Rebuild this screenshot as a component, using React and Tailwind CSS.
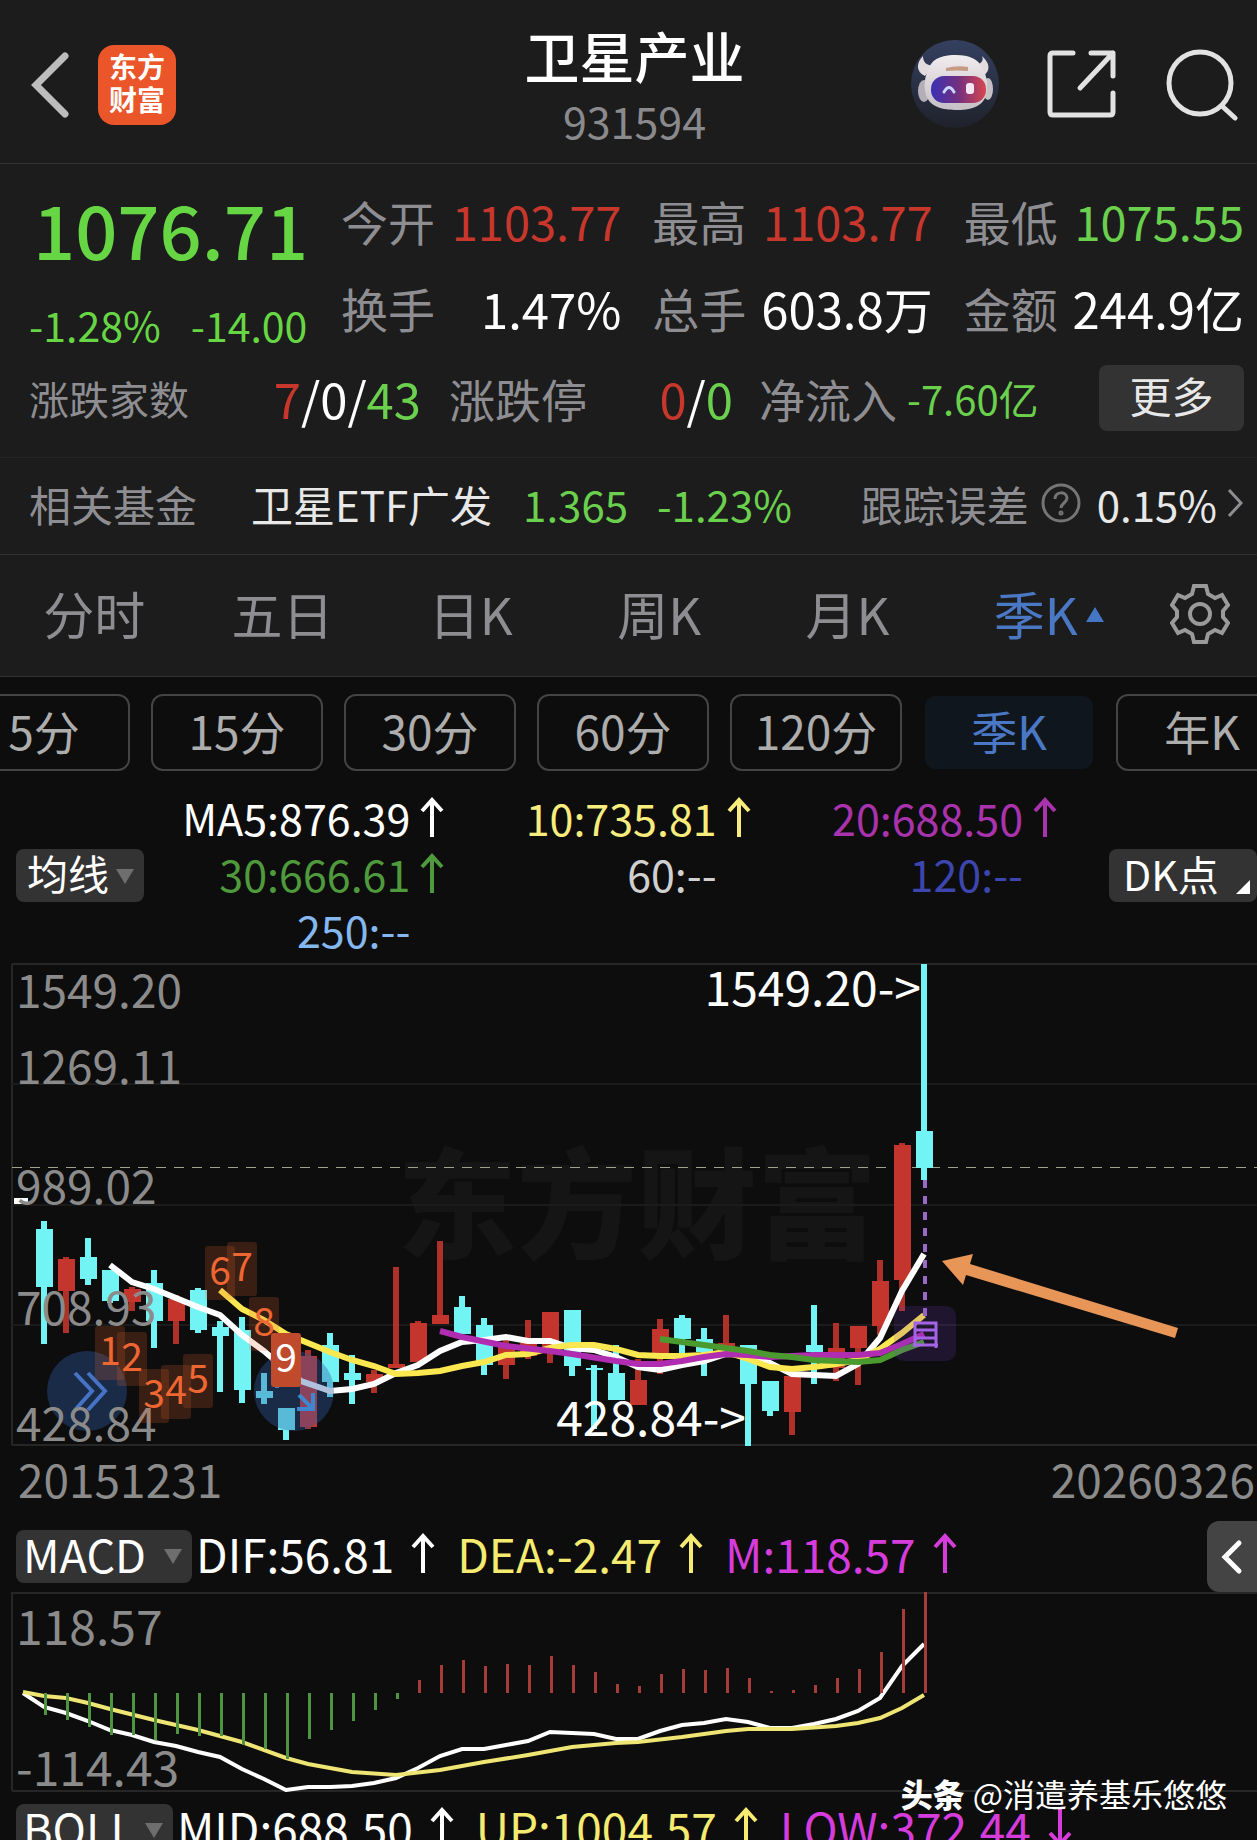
import React, { useState } from 'react';

const UP = '#c4352d';
const DOWN = '#72f4f4';

const quotes = [
    { label: '今开', value: '1103.77', color: 'text-[#c8372c]' },
    { label: '最高', value: '1103.77', color: 'text-[#c8372c]' },
    { label: '最低', value: '1075.55', color: 'text-[#6bd04e]' },
    { label: '换手', value: '1.47%', color: 'text-white text-[49px]' },
    { label: '总手', value: '603.8万', color: 'text-white text-[49px]' },
    { label: '金额', value: '244.9亿', color: 'text-white text-[49px]' },
];

const tabs = ['分时', '五日', '日K', '周K', '月K', '季K'];
const periods = ['5分', '15分', '30分', '60分', '120分', '季K', '年K'];

const averages = [
    { text: 'MA5:876.39', arrow: true, color: 'text-white' },
    { text: '10:735.81', arrow: true, color: 'text-[#f7ec7c]' },
    { text: '20:688.50', arrow: true, color: 'text-[#a933ac]' },
    { text: '30:666.61', arrow: true, color: 'text-[#4f9a3c]' },
    { text: '60:--', color: 'text-[#d0d0d0]' },
    { text: '120:--', color: 'text-[#3c46ae]' },
    { text: '250:--', color: 'text-[#84b8ee]' },
];

// [direction, high, body top, body bottom, low], one quarter every 22 units
const candles = [
    ['d', 1221, 1229, 1287, 1344], ['u', 1257, 1259, 1291, 1333], ['d', 1238, 1257, 1279, 1285],
    ['d', 1270, 1270, 1301, 1303], ['u', 1287, 1289, 1302, 1311], ['d', 1270, 1283, 1321, 1348],
    ['u', 1295, 1299, 1321, 1344], ['d', 1288, 1290, 1330, 1333], ['d', 1321, 1327, 1336, 1392],
    ['d', 1317, 1330, 1390, 1403], ['d', 1373, 1391, 1398, 1404], ['d', 1408, 1408, 1430, 1440],
    ['u', 1350, 1356, 1427, 1429], ['d', 1333, 1345, 1382, 1397], ['d', 1355, 1373, 1380, 1404],
    ['u', 1370, 1374, 1382, 1393], ['u', 1267, 1364, 1368, 1368], ['u', 1321, 1323, 1362, 1362],
    ['u', 1241, 1315, 1324, 1324], ['d', 1296, 1307, 1334, 1334], ['d', 1318, 1325, 1365, 1375],
    ['u', 1340, 1345, 1365, 1379], ['u', 1320, 1343, 1356, 1359], ['u', 1312, 1312, 1347, 1363],
    ['d', 1310, 1310, 1366, 1376], ['d', 1365, 1368, 1370, 1429], ['d', 1345, 1373, 1400, 1400],
    ['u', 1359, 1380, 1405, 1405], ['u', 1319, 1329, 1356, 1374], ['d', 1315, 1318, 1339, 1354],
    ['d', 1328, 1339, 1352, 1376], ['u', 1315, 1343, 1352, 1352], ['d', 1345, 1345, 1384, 1446],
    ['d', 1381, 1381, 1411, 1416], ['u', 1375, 1376, 1412, 1435], ['d', 1305, 1345, 1352, 1384],
    ['u', 1323, 1348, 1368, 1381], ['u', 1326, 1326, 1348, 1385], ['u', 1260, 1281, 1326, 1335],
    ['u', 1143, 1145, 1280, 1311], ['d', 964, 1131, 1168, 1180],
];

const maLines = [
    { color: '#ffffff', points: '110,1265 132,1282 154,1289 176,1298 198,1307 220,1315 242,1335 264,1351 286,1370 301,1381 330,1391 352,1389 374,1384 396,1373 418,1365 440,1351 462,1342 484,1340 506,1337 528,1341 550,1341 572,1348 594,1350 616,1357 638,1367 660,1370 682,1365 704,1361 726,1354 748,1355 770,1363 792,1374 814,1375 836,1376 858,1364 880,1338 902,1291 924,1254' },
    { color: '#fbe74f', points: '220,1290 242,1309 264,1320 286,1334 308,1343 330,1352 352,1360 374,1366 396,1374 418,1373 440,1371 462,1366 484,1362 506,1355 528,1354 550,1348 572,1345 594,1345 616,1349 638,1355 660,1356 682,1356 704,1355 726,1352 748,1359 770,1367 792,1369 814,1367 836,1364 858,1360 880,1349 902,1333 924,1315' },
    { color: '#b02cb0', points: '440,1331 462,1337 506,1346 550,1351 572,1354 616,1361 638,1364 660,1364 682,1361 704,1357 726,1354 748,1355 770,1357 814,1355 858,1355 880,1353 902,1344 924,1334' },
    { color: '#4b9a30', points: '660,1339 704,1345 748,1351 770,1355 792,1357 814,1360 858,1362 880,1360 902,1350 924,1342' },
];

const countMarks = [
    { n: 1, x: 95, y: 1326 },
    { n: 2, x: 117, y: 1332 },
    { n: 3, x: 139, y: 1369 },
    { n: 4, x: 161, y: 1365 },
    { n: 5, x: 183, y: 1354 },
    { n: 6, x: 205, y: 1246 },
    { n: 7, x: 227, y: 1242 },
    { n: 8, x: 249, y: 1297 },
];

const histogram = [
    1715, 1720, 1727, 1735, 1735, 1740, 1734, 1736, 1736, 1745, 1749, 1759, 1739, 1730, 1721, 1710, 1699,
    1680, 1665, 1660, 1666, 1664, 1665, 1656, 1665, 1672, 1684, 1686, 1674, 1669, 1670, 1668, 1678, 1691,
    1690, 1685, 1678, 1669, 1652, 1609, 1592,
];

const barX = (i) => 44 + i * 22;

function Arrow({ down }) {
    return (
        <svg viewBox="0 0 24 40" className={down ? 'w-6 h-10 rotate-180' : 'w-6 h-10'} fill="none" stroke="currentColor" strokeWidth="4" aria-hidden="true">
            <path d="M12 40V3M2 14L12 3L22 14" />
        </svg>
    );
}

function Dropdown({ label, options, className }) {
    return (
        <div className="relative shrink-0">
            <select
                aria-label={label}
                className={`appearance-none h-[53px] pb-[6px] rounded-lg bg-[#333333] text-white leading-[47px] outline-none ${className}`}
            >
                {options.map((o) => <option key={o}>{o}</option>)}
            </select>
            <svg viewBox="0 0 18 15" className="absolute right-[10px] top-[20px] w-[18px] h-[15px] pointer-events-none" aria-hidden="true">
                <path d="M0 0H18L9 15Z" fill="#6e6e6e" />
            </svg>
        </div>
    );
}

function Indicator({ text, color, down }) {
    return (
        <span className={`flex items-center gap-[17px] ${color}`}>
            {text}
            <Arrow down={down} />
        </span>
    );
}

function RobotAvatar() {
    return (
        <svg viewBox="0 0 88 88" className="w-[88px] h-[88px]" aria-hidden="true">
            <defs>
                <linearGradient id="halo" x1="0" y1="0" x2="0" y2="1">
                    <stop offset="0" stopColor="#34405f" />
                    <stop offset="1" stopColor="#1f222b" />
                </linearGradient>
                <linearGradient id="helmet" x1="0" y1="0" x2="0" y2="1">
                    <stop offset="0" stopColor="#f1ecee" />
                    <stop offset="1" stopColor="#c5bfc6" />
                </linearGradient>
                <linearGradient id="visor" x1="0" y1="0" x2="1" y2="0">
                    <stop offset="0" stopColor="#3a31b4" />
                    <stop offset="0.5" stopColor="#73307f" />
                    <stop offset="1" stopColor="#d8464f" />
                </linearGradient>
            </defs>
            <circle cx="44" cy="44" r="44" fill="url(#halo)" />
            <path d="M12 16C5 23 5 32 14 36L22 26C15 25 12 22 12 16ZM71 16C79 23 80 31 72 36L64 25C70 24 73 21 71 16Z" fill="#e2dcdf" />
            <ellipse cx="13" cy="51" rx="6" ry="11" fill="#b4aeb6" />
            <ellipse cx="77" cy="49" rx="5" ry="11" fill="#c5bfc6" />
            <path d="M18 28C22 17 34 15 45 15C58 15 68 19 71 28C76 36 77 43 76 52C74 65 62 70 47 70C31 70 19 67 15 55C12 45 14 36 18 28Z" fill="url(#helmet)" />
            <path d="M35 28Q46 25 57 27V31Q46 30 35 31Z" fill="#c69a83" />
            <rect x="20" y="36" width="55" height="27" rx="13" fill="url(#visor)" />
            <path d="M33 52Q38 43 43 52" fill="none" stroke="#c9d5ff" strokeWidth="3" strokeLinecap="round" />
            <rect x="55" y="43" width="8" height="11" rx="3" fill="#f2e6f7" />
        </svg>
    );
}

function Header() {
    return (
        <header className="relative flex items-center justify-between h-[164px] pl-[30px] pr-[18px] pb-[20px] bg-[#1c1c1c] border-b border-[#333333]">
            <div className="flex items-center gap-7 pt-[26px]">
                <button type="button" aria-label="返回">
                    <svg viewBox="0 0 40 68" className="w-10 h-[68px]" fill="none" stroke="#bdbdbd" strokeWidth="7" strokeLinecap="round">
                        <path d="M35 5L6 34L35 63" />
                    </svg>
                </button>
                <div className="flex items-center justify-center w-[78px] h-20 pb-1 rounded-2xl bg-[#ea5529] text-white text-[28px] leading-[33px] font-bold text-center">
                    东方<br />财富
                </div>
            </div>
            <div className="absolute inset-x-0 top-[18px] pl-3 text-center pointer-events-none">
                <h1 className="text-[55px] leading-[72px] font-medium text-white">卫星产业</h1>
                <p className="text-[43px] leading-[60px] text-[#8a8a8d]">931594</p>
            </div>
            <div className="flex items-center gap-[48px] pt-[24px]">
                <button type="button" aria-label="智能助手"><RobotAvatar /></button>
                <button type="button" aria-label="分享">
                    <svg viewBox="0 0 70 70" className="w-[70px] h-[70px]" fill="none" stroke="#e2e2e2" strokeWidth="5" strokeLinecap="round" strokeLinejoin="round">
                        <path d="M26 4H6Q3 4 3 7V63Q3 66 6 66H63Q66 66 66 63V44" />
                        <path d="M44 4H66V27M66 4L33 39" />
                    </svg>
                </button>
                <button type="button" aria-label="搜索">
                    <svg viewBox="0 0 74 74" className="w-[74px] h-[74px]" fill="none" stroke="#e2e2e2" strokeWidth="5" strokeLinecap="round">
                        <circle cx="35" cy="36" r="31" />
                        <path d="M57 59L70 71" />
                    </svg>
                </button>
            </div>
        </header>
    );
}

function QuotePanel() {
    return (
        <section className="bg-[#1c1c1c] border-b border-[#262626] h-[294px] pl-[29px] pr-[13px] pt-[13px]">
            <div className="flex justify-between h-[183px]">
                <div className="w-[300px] text-[#67d644]">
                    <div className="text-[74px] leading-[102px] font-medium pl-1">1076.71</div>
                    <div className="flex gap-[30px] mt-[9px] text-[41px] leading-[72px]">
                        <span>-1.28%</span>
                        <span>-14.00</span>
                    </div>
                </div>
                <dl className="grid grid-cols-3 content-start gap-x-[31px] w-[903px] text-[47px] leading-[87px]">
                    {quotes.map((q) => (
                        <div key={q.label} className="flex justify-between">
                            <dt className="text-[#8e8e92]">{q.label}</dt>
                            <dd className={`leading-[87px] ${q.color}`}>{q.value}</dd>
                        </div>
                    ))}
                </dl>
            </div>
            <div className="flex items-center h-[76px] leading-[72px] text-[46px] text-[#8e8e92]">
                <span className="text-[40px] w-[200px]">涨跌家数</span>
                <span className="w-[192px] text-right text-[49px] text-white">
                    <span className="text-[#c8372c]">7</span>/0/<span className="text-[#6bd04e]">43</span>
                </span>
                <span className="w-[170px] pl-[28px]">涨跌停</span>
                <span className="w-[142px] text-right text-[49px] text-white">
                    <span className="text-[#c8372c]">0</span>/<span className="text-[#6bd04e]">0</span>
                </span>
                <span className="pl-[26px]">净流入</span>
                <span className="pl-[10px] text-[40px] text-[#6bd04e]">-7.60亿</span>
                <button type="button" className="ml-auto w-[145px] h-[66px] pb-[6px] leading-[60px] rounded-lg bg-[#333333] text-[42px] text-[#e8e8e8]">更多</button>
            </div>
        </section>
    );
}

function FundRow() {
    return (
        <a href="#fund" className="flex items-center h-[97px] pb-[6px] pl-[29px] pr-[14px] bg-[#1c1c1c] border-b border-[#333333] text-[42px] text-[#8e8e92]">
            <span>相关基金</span>
            <span className="ml-[54px] text-[#e8e8e8]">卫星ETF广发</span>
            <span className="ml-[31px] text-[#6bd04e]">1.365</span>
            <span className="ml-[29px] text-[#6bd04e]">-1.23%</span>
            <span className="ml-auto">跟踪误差</span>
            <svg viewBox="0 0 40 40" className="ml-[12px] w-10 h-10" fill="none" stroke="#757575" strokeWidth="3" aria-hidden="true">
                <circle cx="20" cy="20" r="18" />
                <path d="M14 16C14 8 26 8 26 15C26 20 20 20 20 25" />
                <circle cx="20" cy="30" r="1" />
            </svg>
            <span className="ml-[16px] text-[#e8e8e8]">0.15%</span>
            <svg viewBox="0 0 16 28" className="ml-[10px] w-4 h-7" fill="none" stroke="#8e8e92" strokeWidth="3" aria-hidden="true">
                <path d="M2 1L14 14L2 27" />
            </svg>
        </a>
    );
}

function TabBar({ active, onChange }) {
    return (
        <nav className="flex items-center h-[122px] pb-1 bg-[#1c1c1c] border-b border-[#333333] text-[51px]">
            {tabs.map((t) => (
                <button
                    key={t}
                    type="button"
                    onClick={() => onChange(t)}
                    className={t === active ? 'relative flex-1 text-[#4a78c4]' : 'relative flex-1 text-[#8e8e92]'}
                >
                    {t}
                    {t === active && (
                        <svg viewBox="0 0 18 15" className="absolute right-[26px] top-[32px] w-[18px] h-[15px]" aria-hidden="true">
                            <path d="M9 0L18 15H0Z" fill="#4377c6" />
                        </svg>
                    )}
                </button>
            ))}
            <button type="button" aria-label="设置" className="flex justify-center w-[127px] pl-[13px]">
                <svg viewBox="0 0 60 60" className="w-[60px] h-[60px]" fill="none" stroke="#9a9a9a" strokeWidth="4">
                    <path d="M24 2H36L38 10L45 14L52 11L58 21L53 27V33L58 39L52 49L45 46L38 50L36 58H24L22 50L15 46L8 49L2 39L7 33V27L2 21L8 11L15 14L22 10Z" />
                    <circle cx="30" cy="30" r="10" />
                </svg>
            </button>
        </nav>
    );
}

function PeriodBar({ active, onChange }) {
    return (
        <div className="overflow-hidden pt-[17px]">
            <div className="flex gap-[21px] -ml-[42px]">
                {periods.map((p) => (
                    <button
                        key={p}
                        type="button"
                        onClick={() => onChange(p)}
                        className={
                            p === active
                                ? 'shrink-0 w-[172px] h-[77px] pb-[6px] rounded-xl border-2 border-[#0d0d0d] bg-[#10161e] text-[46px] leading-[66px] text-[#4a78c4]'
                                : 'shrink-0 w-[172px] h-[77px] pb-[6px] rounded-xl border-2 border-[#444444] text-[46px] leading-[66px] text-[#adadad]'
                        }
                    >
                        {p}
                    </button>
                ))}
            </div>
        </div>
    );
}

function AverageLegend() {
    return (
        <div className="flex items-center mt-[20px] h-[168px] pl-4">
            <Dropdown label="主图指标" options={['均线', 'BOLL']} className="w-[128px] pl-[11px] text-[41px]" />
            <div className="grid grid-cols-3 flex-1 mr-[46px] pb-1 text-[43px] leading-[56px]">
                {averages.map((a) => (
                    <span key={a.text} className={`flex items-center justify-end ${a.color}`}>
                        {a.text}
                        <span className="w-[40px] pl-[10px]">{a.arrow && <Arrow />}</span>
                    </span>
                ))}
            </div>
            <button type="button" className="relative w-[148px] h-[53px] pb-1 rounded-lg bg-[#333333] pl-[14px] text-left text-[41px] leading-[48px] text-white">
                DK点
                <svg viewBox="0 0 14 14" className="absolute right-[7px] bottom-[8px] w-[14px] h-[14px]" aria-hidden="true">
                    <path d="M14 0V14H0Z" fill="#fff" />
                </svg>
            </button>
        </div>
    );
}

function PriceChart() {
    return (
        <svg viewBox="0 959 1257 491" className="block w-full h-auto" role="img" aria-label="季K线图">
            <text x="637" y="1250" textAnchor="middle" fontSize="120" fontWeight="900" fill="#151515">东方财富</text>
            <g stroke="#262626" strokeWidth="2">
                <path d="M12 964H1257M12 1445H1257M12 964V1445" />
                <path d="M12 1084H1257M12 1205H1257M12 1325H1257" stroke="#1b1b1b" />
            </g>
            <path d="M12 1167.5H1257" stroke="#a3a18e" strokeDasharray="10 8" />
            <rect x="14" y="1198" width="14" height="6" fill="#fff" />

            {candles.map(([dir, high, top, bottom, low], i) => (
                <g key={i} fill={dir === 'u' ? UP : DOWN}>
                    <rect x={barX(i) - 3} y={high} width="6" height={low - high} opacity={dir === 'u' ? 0.88 : 1} />
                    <rect x={barX(i) - 8} y={top} width="17" height={bottom - top} />
                </g>
            ))}

            {maLines.map((l) => (
                <polyline key={l.color} points={l.points} fill="none" stroke={l.color} strokeWidth="6" />
            ))}

            {/* chart controls */}
            <circle cx="87" cy="1391" r="40" fill="#2f5ca8" fillOpacity="0.38" />
            <path d="M75 1373L92 1391L75 1410M88 1373L105 1391L88 1410" fill="none" stroke="#4673c4" strokeWidth="4" />
            <circle cx="294" cy="1391" r="40" fill="#2f5ca8" fillOpacity="0.38" />
            <path d="M277 1388V1372H292M278 1373L289 1385M313 1393V1409H297M312 1408L299 1395" fill="none" stroke="#3f86cf" strokeWidth="4" />

            {/* axis labels */}
            <g fontSize="46" fill="#8b8b8b">
                <text x="16" y="1008">1549.20</text>
                <text x="16" y="1084">1269.11</text>
                <text x="16" y="1204">989.02</text>
                <text x="16" y="1325">708.93</text>
                <text x="16" y="1441">428.84</text>
            </g>
            <g fontSize="48" fill="#fff" textAnchor="end">
                <text x="921" y="1006">{'1549.20->'}</text>
                <text x="746" y="1436">{'428.84->'}</text>
            </g>

            {/* nine-turn counter */}
            <g fontSize="39" textAnchor="middle" fill="#ee6632">
                {countMarks.map((m) => (
                    <g key={m.n}>
                        <rect x={m.x} y={m.y} width="30" height="54" rx="3" fill="#e8622c" fillOpacity="0.2" />
                        <text x={m.x + 15} y={m.y + 39}>{m.n}</text>
                    </g>
                ))}
            </g>
            <rect x="271" y="1333" width="30" height="54" rx="3" fill="#bf4a2c" />
            <text x="286" y="1372" fontSize="39" textAnchor="middle" fill="#fff">9</text>

            <path d="M925 1180V1318" stroke="#9a68c8" strokeWidth="4" strokeDasharray="8 8" />
            <rect x="894" y="1306" width="62" height="55" rx="10" fill="#7a3cc8" fillOpacity="0.18" />
            <path d="M915 1347V1323H936V1348M915 1330H936M915 1338H936M913 1345H938" fill="none" stroke="#a365e6" strokeWidth="3" />

            <path d="M942 1261L973 1254L970 1264L1178 1328L1175 1338L966 1275L963 1285Z" fill="#e89558" />
        </svg>
    );
}

function MacdChart() {
    return (
        <svg viewBox="0 1592 1257 200" className="block w-full h-auto" role="img" aria-label="MACD">
            <path d="M12 1593H1257M12 1791H1257M12 1592V1791" stroke="#262626" strokeWidth="2" />
            <g fontSize="48" fill="#8b8b8b">
                <text x="16" y="1645">118.57</text>
                <text x="16" y="1786">-114.43</text>
            </g>
            <polyline
                fill="none" stroke="#fff" strokeWidth="4"
                points="23,1693 44,1707 66,1713 88,1721 110,1730 132,1735 154,1742 176,1746 198,1752 220,1757 242,1769 264,1779 286,1790 308,1787 330,1787 352,1786 374,1783 396,1778 418,1768 440,1756 462,1749 484,1749 506,1745 528,1741 550,1732 572,1733 594,1734 616,1739 638,1739 660,1731 682,1725 704,1723 726,1719 748,1722 770,1728 792,1728 814,1724 836,1719 858,1711 880,1698 902,1666 924,1644"
            />
            <polyline
                fill="none" stroke="#efe574" strokeWidth="4"
                points="23,1692 44,1696 66,1698 88,1703 110,1709 154,1720 198,1730 242,1742 286,1758 308,1764 352,1772 396,1775 440,1770 484,1762 528,1755 572,1747 616,1743 638,1742 682,1737 726,1731 748,1729 792,1729 836,1726 858,1723 880,1718 902,1708 924,1695"
            />
            {histogram.map((y, i) => (
                <rect
                    key={i}
                    x={barX(i)}
                    y={Math.min(y, 1693)}
                    width="3"
                    height={Math.abs(y - 1693)}
                    fill={y > 1693 ? '#4f9440' : '#a63c38'}
                />
            ))}
        </svg>
    );
}

export default function App() {
    const [tab, setTab] = useState('季K');
    const [period, setPeriod] = useState('季K');

    return (
        <div className="relative h-screen overflow-hidden bg-[#0d0d0d] whitespace-nowrap font-['Noto_Sans_CJK_SC',sans-serif]">
            <Header />
            <QuotePanel />
            <FundRow />
            <TabBar active={tab} onChange={setTab} />
            <PeriodBar active={period} onChange={setPeriod} />
            <AverageLegend />
            <PriceChart />
            <div className="flex justify-between pl-[18px] pr-[2px] pb-[6px] text-[46px] leading-[56px] text-[#8b8b8b]">
                <span>20151231</span>
                <span>20260326</span>
            </div>

            <div className="flex items-start h-20 pt-[17px] pl-4 text-[46px] leading-[48px]">
                <Dropdown label="副图指标一" options={['MACD', 'KDJ']} className="w-[176px] pl-[7px] text-[45px]" />
                <div className="flex gap-[22px] pl-1">
                    <Indicator text="DIF:56.81" color="text-white" />
                    <Indicator text="DEA:-2.47" color="text-[#f5eb70]" />
                    <Indicator text="M:118.57" color="text-[#d63cdc]" />
                </div>
                <button type="button" aria-label="展开" className="flex items-center justify-center ml-auto -mt-[8px] w-[50px] h-[71px] rounded-l-xl bg-[#444444]">
                    <svg viewBox="0 0 22 36" className="w-[22px] h-9" fill="none" stroke="#fff" strokeWidth="5" strokeLinecap="round">
                        <path d="M18 4L4 18L18 32" />
                    </svg>
                </button>
            </div>
            <MacdChart />
            <div className="flex items-start pt-[11px] pl-4 text-[46px] leading-[48px]">
                <Dropdown label="副图指标二" options={['BOLL', 'RSI']} className="w-[157px] pl-[7px] text-[45px]" />
                <div className="flex gap-[22px] pl-1">
                    <Indicator text="MID:688.50" color="text-white" />
                    <Indicator text="UP:1004.57" color="text-[#f5eb70]" />
                    <Indicator text="LOW:372.44" color="text-[#d63cdc]" down />
                </div>
            </div>

            <div className="absolute right-[30px] bottom-[24px] flex gap-2 text-[32px] leading-[46px] text-white">
                <span className="font-black">头条</span>
                <span>@消遣养基乐悠悠</span>
            </div>
        </div>
    );
}
